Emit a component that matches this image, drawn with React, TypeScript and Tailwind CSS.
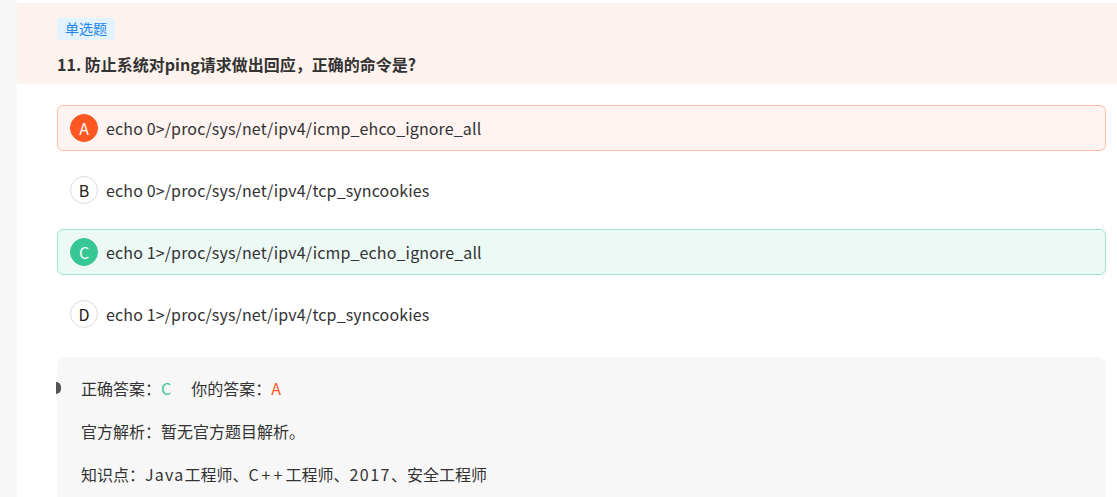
import React from "react";

const font = { fontFamily: '"Microsoft YaHei", "Noto Sans CJK SC", "Noto Sans", sans-serif' };

type Opt = { key: string; text: string; state: "wrong" | "right" | "none" };

const options: Opt[] = [
  { key: "A", text: "echo 0>/proc/sys/net/ipv4/icmp_ehco_ignore_all", state: "wrong" },
  { key: "B", text: "echo 0>/proc/sys/net/ipv4/tcp_syncookies", state: "none" },
  { key: "C", text: "echo 1>/proc/sys/net/ipv4/icmp_echo_ignore_all", state: "right" },
  { key: "D", text: "echo 1>/proc/sys/net/ipv4/tcp_syncookies", state: "none" },
];

function Option({ o }: { o: Opt }) {
  const box =
    o.state === "wrong"
      ? "border border-[#ffbca5] bg-[#fff4f1]"
      : o.state === "right"
      ? "border border-[#9fe4cb] bg-[#ecf9f5]"
      : "border border-transparent bg-white";
  const circle =
    o.state === "wrong"
      ? "bg-[#ff5722] text-white border border-[#ff5722]"
      : o.state === "right"
      ? "bg-[#36c795] text-white border border-[#36c795]"
      : "bg-white text-[#222] border border-[#dddddd]";
  return (
    <div className={`flex h-[46px] items-center rounded-[6px] pl-[12px] ${box}`}>
      <div className={`flex h-[28px] w-[28px] items-center justify-center rounded-full text-[16px] ${circle}`}>
        {o.key}
      </div>
      <span className="ml-[8px] text-[16px] tracking-[0.13px] text-[#333]">{o.text}</span>
    </div>
  );
}

export default function App() {
  return (
    <div className="flex h-[497px] w-full overflow-hidden bg-white" style={font}>
      <div className="w-[17px] shrink-0 bg-[#f7f7f7]" />
      <div className="flex flex-1 flex-col pt-[3px]">
        <div className="h-[81px] bg-[#fef2ee] pl-[40px] pt-[12px]">
          <div className="inline-flex h-[22px] items-center rounded-[4px] bg-[#e3f2ff] px-[8px] text-[14px] text-[#1e88f0]">
            单选题
          </div>
          <div className="mt-[12px] text-[16px] font-bold text-[#333]">
            11. 防止系统对ping请求做出回应，正确的命令是?
          </div>
        </div>
        <div className="flex flex-1 flex-col pl-[40px] pr-[11px] pt-[21px]">
          <div className="flex flex-col gap-[16px]">
            {options.map((o) => (
              <Option key={o.key} o={o} />
            ))}
          </div>
          <div className="relative mt-[20px] flex-1 rounded-t-[8px] bg-[#f7f7f7] pl-[24px] pt-[20px] text-[16px] text-[#333]">
            <div className="absolute left-[-1px] top-[25px] h-[12px] w-[5px] rounded-r-full bg-[#555]" />
            <div className="flex h-[22px] items-center">
              <span>正确答案：</span>
              <span className="text-[#36c795]">C</span>
              <span className="ml-[20px]">你的答案：</span>
              <span className="text-[#ff5722]">A</span>
            </div>
            <div className="mt-[21px] flex h-[22px] items-center">官方解析：暂无官方题目解析。</div>
            <div className="mt-[21px] flex h-[22px] items-center">
              <span>知识点：</span>
              <span className="tracking-[1.2px]">Java</span>
              <span>工程师、</span>
              <span className="tracking-[3px]">C++</span>
              <span>工程师、</span>
              <span className="tracking-[1.5px]">2017</span>
              <span>、安全工程师</span>
            </div>
          </div>
        </div>
      </div>
    </div>
  );
}
